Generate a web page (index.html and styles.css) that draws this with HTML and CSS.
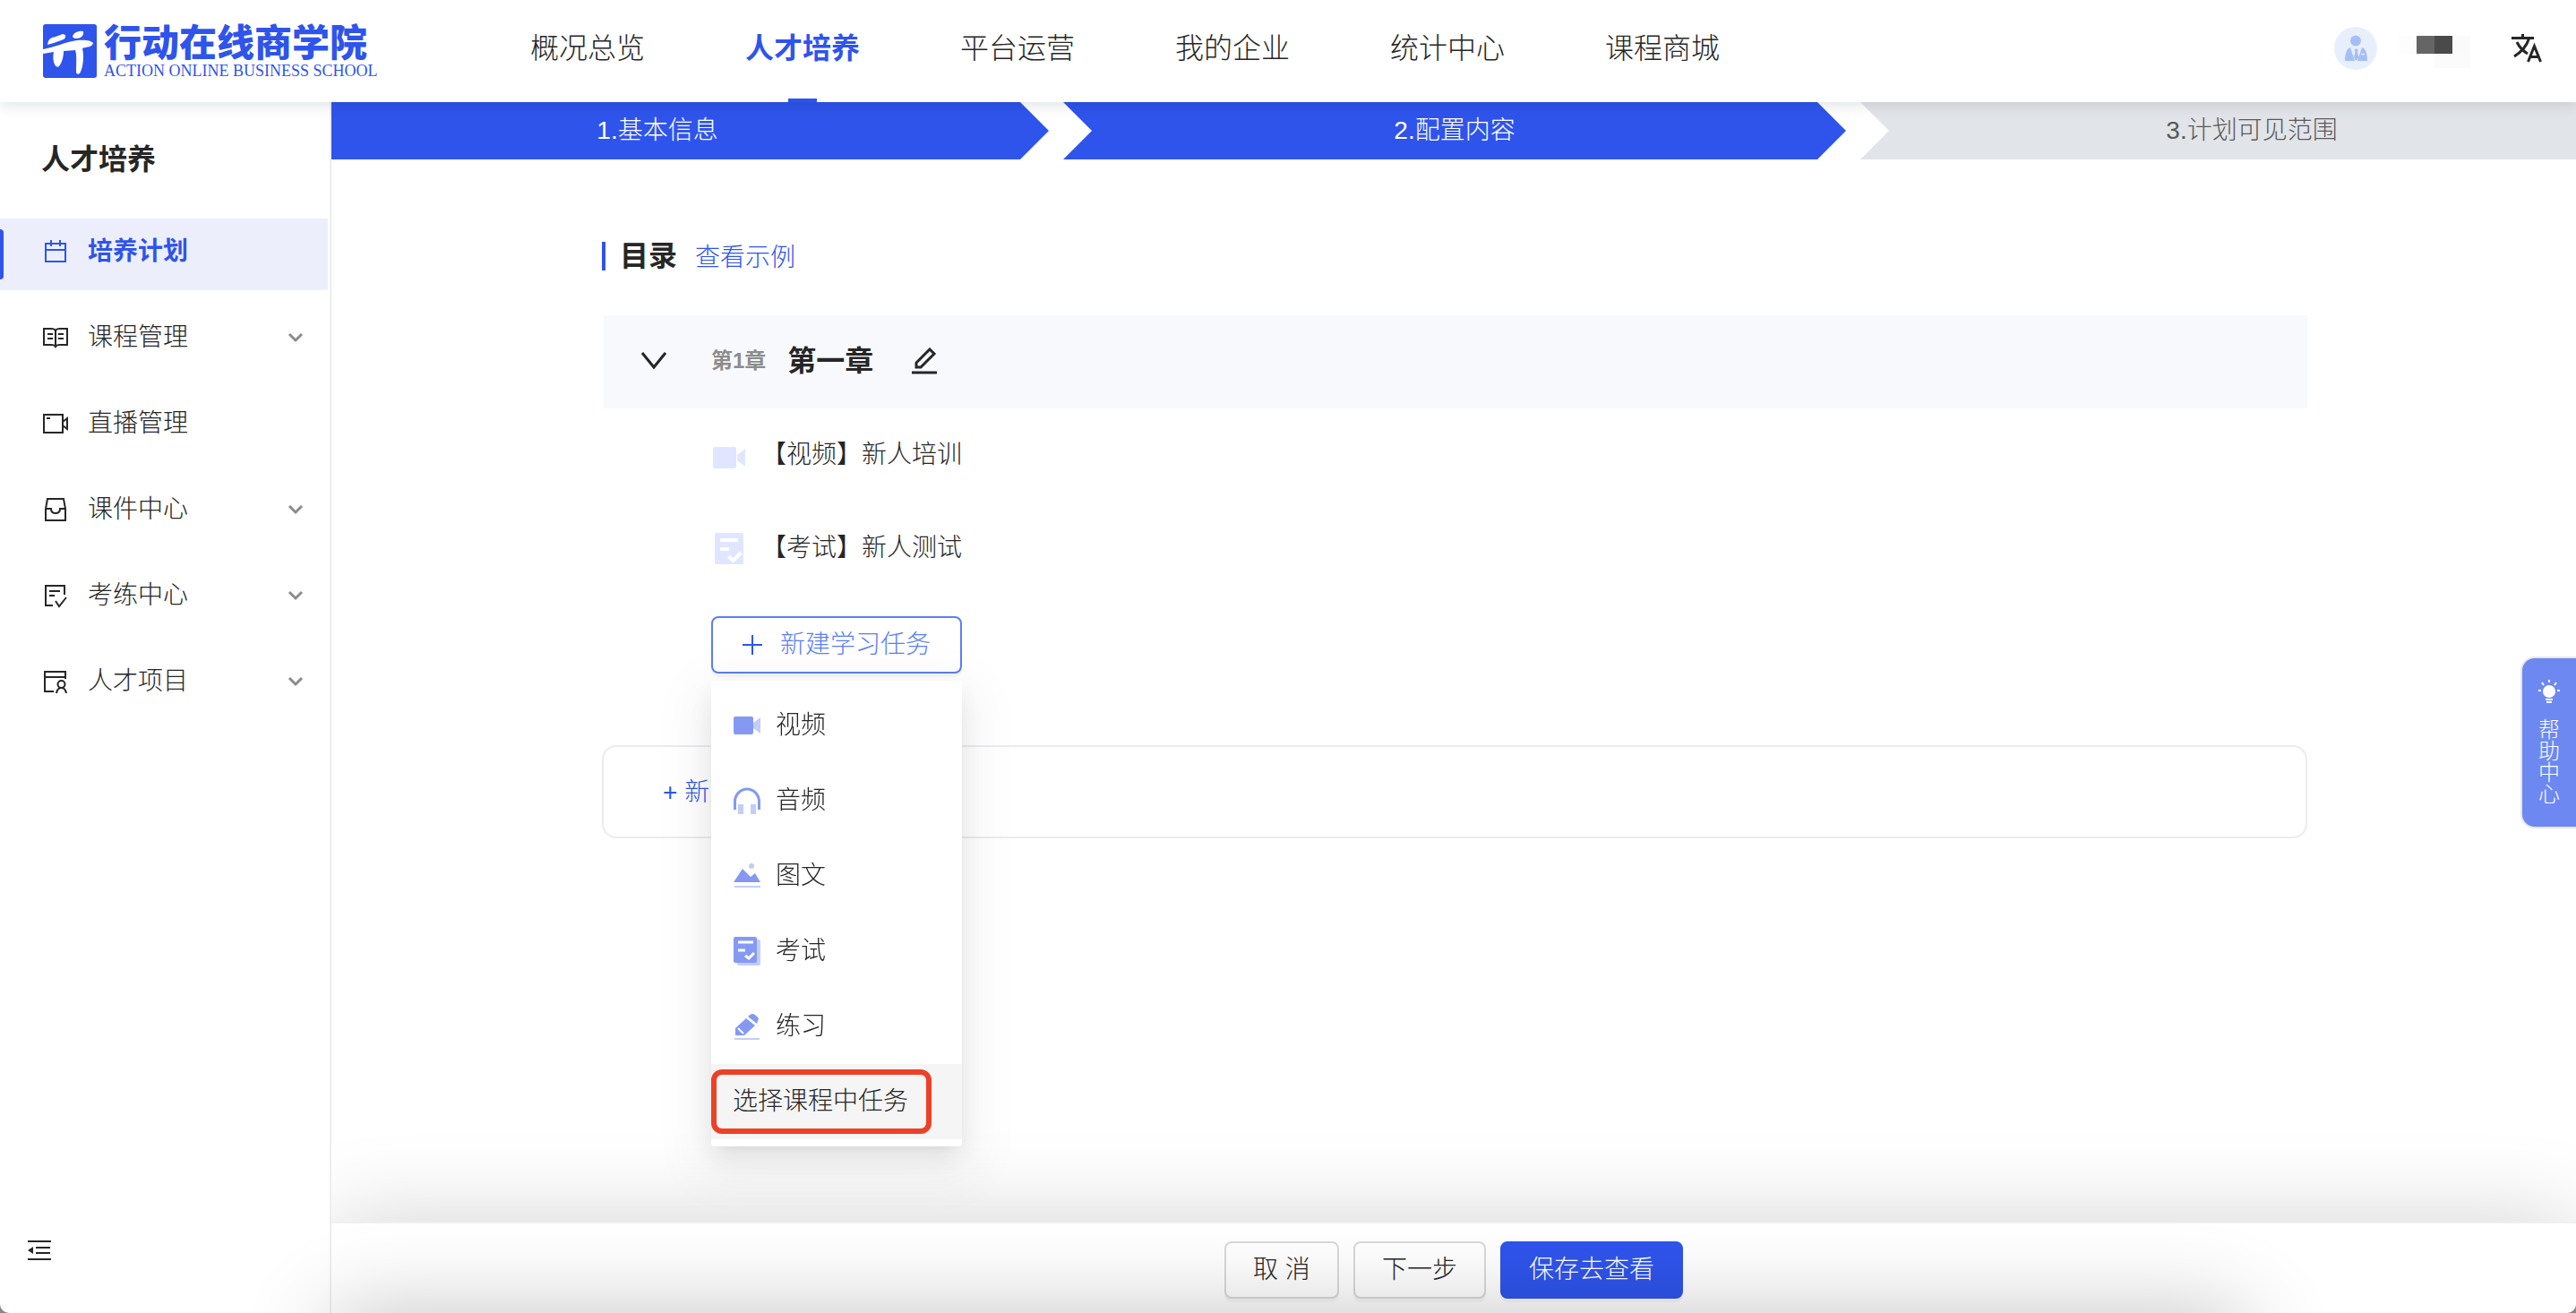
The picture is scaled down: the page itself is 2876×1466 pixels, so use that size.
FILE: index.html
```html
<!DOCTYPE html>
<html lang="zh-CN">
<head>
    <meta charset="UTF-8">
    <meta name="viewport" content="width=device-width, initial-scale=1.0">
    <title>行动在线商学院 - 培养计划</title>
    <link rel="stylesheet" href="styles.css">
</head>
<body>
    <header class="header">
        <a class="logo" href="#">
            <svg class="logo-mark" viewBox="0 0 60 60" aria-hidden="true">
                <rect width="60" height="60" rx="3" fill="#2f54eb"/>
                <g fill="#fff">
                    <path d="M5 23C6 16 9 15 14 14L22 11C26 11 26 15 23 17L12 21Z"/>
                    <path d="M33 14C34 9 40 7 45 8C46 13 42 16 37 16Q34 16 33 14Z"/>
                    <path d="M0 28C12 26 28 19 38 18C46 17 54 18 56 21C55 26 49 25 44 27C46 36 45 48 41 55Q38 57 37 54C37 45 38 34 36 29L23 30C23 37 21 43 18 47Q15 49 13 45C11 41 11 36 12 31L0 33Z"/>
                </g>
            </svg>
            <span class="logo-text">
                <span class="logo-cn">行动在线商学院</span>
                <span class="logo-en">ACTION ONLINE BUSINESS SCHOOL</span>
            </span>
        </a>
        <nav class="nav">
            <a class="nav-item" href="#">概况总览</a>
            <a class="nav-item active" href="#">人才培养</a>
            <a class="nav-item" href="#">平台运营</a>
            <a class="nav-item" href="#">我的企业</a>
            <a class="nav-item" href="#">统计中心</a>
            <a class="nav-item" href="#">课程商城</a>
        </nav>
        <div class="user">
            <svg class="avatar" viewBox="0 0 48 48" aria-hidden="true">
                <circle cx="24" cy="24" r="24" fill="#e8effc"/>
                <g fill="#a5bff6">
                    <circle cx="24" cy="15.500" r="6"/>
                    <path d="M12 38C12 30 14 24 18 23L23 38Z"/>
                    <path d="M37 38C37 30 35 24 31 23L26 38Z"/>
                    <path d="M24.500 24L27 26L26 28L27.500 34L24.500 38L22 34L23.500 28L22.500 26Z"/>
                </g>
                <path d="M30 30.500H34" stroke="#e8effc" stroke-width="1.500"/>
            </svg>
            <span class="user-name"></span>
            <button class="icon-button" type="button" aria-label="切换语言">
                <svg width="34" height="32" viewBox="0 0 34 32" fill="none" stroke="#262626" stroke-width="3">
                    <path d="M0 4.500H25M12.500 0V5M19.500 5C17 13 11 20 3 25M6 9C9 15 13 19 18 22"/>
                    <path d="M18.500 31L25.500 13.500L32.500 31M20.500 25.500H30.500"/>
                </svg>
            </button>
        </div>
    </header>

    <div class="layout">
        <aside class="sidebar">
            <h2 class="sidebar-title">人才培养</h2>
            <nav class="menu">
                <a class="menu-item active" href="#">
                    <svg class="menu-icon" viewBox="0 0 28 28">
                        <path d="M3 5H25V25H3ZM3 12H25M9 1V8M19 1V8"/>
                    </svg>
                    <span class="menu-label">培养计划</span>
                </a>
                <a class="menu-item" href="#">
                    <svg class="menu-icon" viewBox="0 0 28 28">
                        <path d="M1 4H9Q13 4 14 6Q15 4 19 4H27V22H19Q15 22 14 24Q13 22 9 22H1ZM14 6V24M5 10H11M5 15H11M17 10H23M17 15H23"/>
                    </svg>
                    <span class="menu-label">课程管理</span>
                    <svg class="menu-arrow" viewBox="0 0 16 10"><path d="M1 1L8 8L15 1"/></svg>
                </a>
                <a class="menu-item" href="#">
                    <svg class="menu-icon" viewBox="0 0 28 28">
                        <path d="M1 4H22V24H1ZM22 12L27 8V20L22 16M4 8H8"/>
                    </svg>
                    <span class="menu-label">直播管理</span>
                </a>
                <a class="menu-item" href="#">
                    <svg class="menu-icon" viewBox="0 0 28 28">
                        <path d="M5 2H23L25 13V26H3V13ZM3 13H9Q9 18 14 18Q19 18 19 13H25"/>
                    </svg>
                    <span class="menu-label">课件中心</span>
                    <svg class="menu-arrow" viewBox="0 0 16 10"><path d="M1 1L8 8L15 1"/></svg>
                </a>
                <a class="menu-item" href="#">
                    <svg class="menu-icon" viewBox="0 0 28 28">
                        <path d="M11 25H3V3H24V13M7 9H19M7 14H13M14 20L18 26L26 16"/>
                    </svg>
                    <span class="menu-label">考练中心</span>
                    <svg class="menu-arrow" viewBox="0 0 16 10"><path d="M1 1L8 8L15 1"/></svg>
                </a>
                <a class="menu-item" href="#">
                    <svg class="menu-icon" viewBox="0 0 28 28">
                        <path d="M12 25H2V3H25V11M2 9H25M15 27Q16 21 20.500 21Q25 21 26 27"/>
                        <circle cx="20.500" cy="17" r="4"/>
                    </svg>
                    <span class="menu-label">人才项目</span>
                    <svg class="menu-arrow" viewBox="0 0 16 10"><path d="M1 1L8 8L15 1"/></svg>
                </a>
            </nav>
            <button class="icon-button collapse" type="button" aria-label="收起菜单">
                <svg width="26" height="24" viewBox="0 0 26 24">
                    <path d="M0 2H26M9 9H25M9 15H25M0 22H26" fill="none" stroke="#262626" stroke-width="2"/>
                    <path d="M0 12L6 8V16Z" fill="#262626"/>
                </svg>
            </button>
        </aside>

        <div class="page">
            <main class="main">
                <div class="steps-wrap">
                    <ol class="steps">
                        <li class="step done">1.基本信息</li>
                        <li class="step done">2.配置内容</li>
                        <li class="step">3.计划可见范围</li>
                    </ol>
                </div>

                <div class="content">
                    <div class="title-row">
                        <h1 class="title">目录</h1>
                        <a class="link" href="#">查看示例</a>
                    </div>

                    <section class="chapter">
                        <div class="chapter-head">
                            <button class="icon-button" type="button" aria-label="收起章节">
                                <svg width="28" height="20" viewBox="0 0 28 20" fill="none" stroke="#262626" stroke-width="3">
                                    <path d="M1 1L14 17L27 1"/>
                                </svg>
                            </button>
                            <span class="chapter-no">第1章</span>
                            <h2 class="chapter-name">第一章</h2>
                            <button class="icon-button" type="button" aria-label="编辑章节">
                                <svg width="30" height="30" viewBox="0 0 30 30" fill="none" stroke="#262626" stroke-width="3">
                                    <path d="M1 28H29M6 22V17L21 2L26 7L11 22Z"/>
                                </svg>
                            </button>
                        </div>
                        <ul class="tasks">
                            <li class="task">
                                <svg class="task-icon" viewBox="0 0 36 36" fill="#e0e6ff">
                                    <rect y="9" width="26" height="24" rx="2"/>
                                    <path d="M27 18L36 11V31L27 24Z"/>
                                </svg>
                                <span>【视频】新人培训</span>
                            </li>
                            <li class="task">
                                <svg class="task-icon" viewBox="0 0 36 36">
                                    <rect x="2" y="1" width="32" height="35" rx="1" fill="#e0e6ff"/>
                                    <path d="M8 9H28M8 19H18M17.500 27L22.500 32L31.500 23" fill="none" stroke="#fff" stroke-width="4"/>
                                </svg>
                                <span>【考试】新人测试</span>
                            </li>
                        </ul>
                        <div class="dropdown">
                            <button class="new-task" type="button">
                                <svg width="22" height="22" viewBox="0 0 22 22" stroke="#2f54eb" stroke-width="2">
                                    <path d="M0 11H22M11 0V22"/>
                                </svg>
                                新建学习任务
                            </button>
                            <ul class="dropdown-menu">
                                <li><a class="dropdown-item" href="#">
                                    <svg class="type-icon" viewBox="0 0 32 32">
                                        <rect x="1" y="6" width="22" height="20" rx="2" fill="#8599f3"/>
                                        <path d="M23 13L31 7V25L23 19Z" fill="#c2cdfa"/>
                                    </svg>
                                    视频
                                </a></li>
                                <li><a class="dropdown-item" href="#">
                                    <svg class="type-icon" viewBox="0 0 32 32">
                                        <path d="M2.500 26V17A13.500 14 0 0 1 29.500 17V26" fill="none" stroke="#8599f3" stroke-width="3"/>
                                        <path d="M6 20H12V31H6ZM20 20H26V31H20Z" fill="#c2cdfa"/>
                                    </svg>
                                    音频
                                </a></li>
                                <li><a class="dropdown-item" href="#">
                                    <svg class="type-icon" viewBox="0 0 32 32">
                                        <path d="M1 23L11 8L20 17L25 13L31 23Z" fill="#8599f3"/>
                                        <circle cx="21" cy="5" r="3" fill="#c2cdfa"/>
                                        <path d="M2 28H31" stroke="#c2cdfa" stroke-width="2"/>
                                    </svg>
                                    图文
                                </a></li>
                                <li><a class="dropdown-item" href="#">
                                    <svg class="type-icon" viewBox="0 0 32 32">
                                        <rect x="5" y="3" width="26" height="29" rx="2" fill="#c2cdfa"/>
                                        <rect x="1" width="26" height="29" rx="2" fill="#8599f3"/>
                                        <path d="M6 6H23M6 15H14M14 21L18 24L24 18" fill="none" stroke="#fff" stroke-width="3"/>
                                    </svg>
                                    考试
                                </a></li>
                                <li><a class="dropdown-item" href="#">
                                    <svg class="type-icon" viewBox="0 0 32 32">
                                        <path d="M3 26V18L15 7L25 15L13 26Z" fill="#8599f3"/>
                                        <path d="M17 5Q21 0 25 3L29 7L27 13Z" fill="#8599f3"/>
                                        <path d="M6 18L12 24" stroke="#fff" stroke-width="2"/>
                                        <path d="M2 30H30" stroke="#c2cdfa" stroke-width="2"/>
                                    </svg>
                                    练习
                                </a></li>
                                <li><a class="dropdown-item hover" href="#">
                                    选择课程中任务
                                    <span class="mark"></span>
                                </a></li>
                            </ul>
                        </div>
                    </section>

                    <button class="new-chapter" type="button">+ 新建章</button>
                </div>
            </main>

            <footer class="footer">
                <button class="btn" type="button">取 消</button>
                <button class="btn" type="button">下一步</button>
                <button class="btn primary" type="button">保存去查看</button>
            </footer>
        </div>
    </div>

    <a class="help" href="#">
        <svg width="24" height="28" viewBox="0 0 24 28" stroke="#fff" stroke-width="2">
            <circle cx="12" cy="13" r="7" fill="#fff" stroke="none"/>
            <path d="M12 0V3M4 3L6 6M20 3L18 6M0 12H3M21 12H24M8 22H16M9 25H15"/>
        </svg>
        <span class="help-text">帮助中心</span>
    </a>
</body>
</html>
```
FILE: styles.css
```css
* {
    box-sizing: border-box;
}

html {
    background-color: #8d8288;
}

body {
    margin: 0;
    min-height: 100vh;
    display: flex;
    flex-direction: column;
    overflow: hidden;
    border-radius: 0 0 10px 10px;
    background-color: #fff;
    color: #262626;
    font-family: "Liberation Sans", "Noto Sans CJK SC", sans-serif;
    font-size: 28px;
    font-weight: 300;
    line-height: 40px;
}

a {
    color: inherit;
    text-decoration: none;
}

button {
    font: inherit;
    color: inherit;
    cursor: pointer;
}

h1,
h2,
ul,
ol {
    margin: 0;
    padding: 0;
    list-style: none;
}

svg {
    display: block;
    flex-shrink: 0;
}

.icon-button {
    padding: 0;
    border: 0;
    background: none;
}

/* header */
.header {
    position: relative;
    z-index: 2;
    display: flex;
    align-items: center;
    height: 114px;
    padding: 0 38px 0 48px;
    background-color: #fff;
    box-shadow: 0 2px 16px rgba(0, 21, 41, 0.14);
}

.logo {
    display: flex;
    align-items: center;
    gap: 8px;
    width: 544px;
    color: #2f54eb;
}

.logo-mark {
    width: 60px;
    height: 60px;
}

.logo-text {
    display: flex;
    flex-direction: column;
    padding-top: 4px;
    white-space: nowrap;
}

.logo-cn {
    font-size: 42px;
    font-weight: 900;
    line-height: 40px;
}

.logo-en {
    font-family: "Liberation Serif", serif;
    font-size: 18px;
    line-height: 20px;
}

.nav {
    display: flex;
    gap: 112px;
    height: 100%;
    font-size: 32px;
    line-height: 108px;
}

.nav-item.active {
    position: relative;
    color: #2f54eb;
    font-weight: 600;
}

.nav-item.active::after {
    content: "";
    position: absolute;
    left: 50%;
    bottom: 0;
    width: 32px;
    height: 4px;
    margin-left: -16px;
    background-color: #2f54eb;
}

.user {
    display: flex;
    align-items: center;
    margin-left: auto;
    padding-bottom: 6px;
}

.avatar {
    width: 48px;
    height: 48px;
}

.user-name {
    width: 40px;
    height: 20px;
    margin: 0 66px 8px 44px;
    background: linear-gradient(90deg, #656565 50%, #4a4a4a 50%);
    box-shadow: 20px 0 #fafafa, 20px 16px #fbfbfb, -20px 0 #fdfdfd;
}

/* sidebar */
.layout {
    flex: 1;
    display: flex;
}

.sidebar {
    display: flex;
    flex-direction: column;
    width: 370px;
    padding: 44px 0 58px;
    border-right: 2px solid #eee;
}

.sidebar-title {
    padding-left: 46px;
    font-size: 32px;
    font-weight: 600;
    line-height: 40px;
}

.menu {
    display: flex;
    flex-direction: column;
    gap: 16px;
    margin: 46px 2px 0 0;
}

.menu-item {
    display: flex;
    align-items: center;
    height: 80px;
    padding: 0 28px 6px 48px;
}

.menu-item.active {
    position: relative;
    background-color: #eceffb;
    color: #2f54eb;
    font-weight: 600;
}

.menu-item.active::before {
    content: "";
    position: absolute;
    left: 0;
    top: 12px;
    width: 4px;
    height: 56px;
    border-radius: 0 4px 4px 0;
    background-color: #2f54eb;
}

.menu-icon {
    width: 28px;
    height: 28px;
    margin-right: 22px;
    fill: none;
    stroke: currentColor;
    stroke-width: 2;
}

.menu-arrow {
    width: 16px;
    height: 10px;
    margin-left: auto;
    overflow: visible;
    fill: none;
    stroke: #8c8c8c;
    stroke-width: 3;
}

.collapse {
    margin-top: auto;
    margin-left: 31px;
    align-self: flex-start;
}

/* steps */
.page {
    flex: 1;
    display: flex;
    flex-direction: column;
    min-width: 0;
}

.main {
    flex: 1;
}

.steps-wrap {
    overflow: hidden;
}

.steps {
    display: flex;
    gap: 16px;
    margin: 0 -75px 0 -73px;
}

.step {
    flex: 1;
    background-color: #e1e4e8;
    color: #595959;
    line-height: 64px;
    text-align: center;
    clip-path: polygon(0 0, calc(100% - 32px) 0, 100% 50%, calc(100% - 32px) 100%, 0 100%, 32px 50%);
}

.step.done {
    background-color: #2f54eb;
    color: #fff;
}

/* content */
.content {
    padding: 88px 300px 0 302px;
}

.title-row {
    display: flex;
    gap: 20px;
    margin-bottom: 44px;
}

.title {
    display: flex;
    align-items: center;
    gap: 16px;
    height: 40px;
    font-size: 32px;
    font-weight: 600;
}

.title::before {
    content: "";
    width: 4px;
    height: 32px;
    background-color: #2f54eb;
}

.link {
    padding-top: 2px;
    color: #2f54eb;
}

.chapter-head {
    display: flex;
    align-items: center;
    height: 104px;
    margin-left: 2px;
    padding: 0 42px 2px;
    background-color: #f8f9fd;
}

.chapter-no {
    margin: 0 24px 0 50px;
    color: #8c8c8c;
    font-size: 24px;
    font-weight: 600;
}

.chapter-name {
    margin-right: 42px;
    font-size: 32px;
    font-weight: 600;
}

.tasks {
    padding-left: 124px;
}

.task {
    display: flex;
    align-items: center;
    gap: 18px;
    height: 104px;
}

.task-icon {
    width: 36px;
    height: 36px;
}

.dropdown {
    position: relative;
    width: 280px;
    margin: 24px 0 80px 122px;
}

.new-task {
    display: flex;
    align-items: center;
    justify-content: center;
    gap: 20px;
    width: 100%;
    height: 64px;
    border: 2px solid #597ef7;
    border-radius: 8px;
    background-color: #fff;
    box-shadow: 0 4px 0 rgba(0, 0, 0, 0.03);
    color: #597ef7;
}

.dropdown-menu {
    position: absolute;
    top: 72px;
    left: 0;
    z-index: 1;
    width: 100%;
    padding: 8px 0;
    border-radius: 4px;
    background-color: #fff;
    box-shadow: 0 6px 12px -8px rgba(0, 0, 0, 0.12), 0 12px 32px rgba(0, 0, 0, 0.08), 0 18px 56px 16px rgba(0, 0, 0, 0.05);
}

.dropdown-item {
    position: relative;
    display: flex;
    align-items: center;
    gap: 16px;
    height: 84px;
    padding: 0 24px;
}

.dropdown-item.hover {
    background-color: #f5f5f5;
}

.type-icon {
    width: 32px;
    height: 32px;
}

.mark {
    position: absolute;
    inset: 6px 34px 6px 0;
    border: 6px solid #ec4127;
    border-radius: 12px;
}

.new-chapter {
    width: 100%;
    height: 104px;
    padding: 2px 66px 0;
    border: 2px solid #ebebf0;
    border-radius: 16px;
    background-color: #fff;
    color: #2f54eb;
    text-align: left;
}

/* footer */
.footer {
    position: relative;
    display: flex;
    justify-content: center;
    gap: 16px;
    padding: 20px 0 16px;
    border-top: 2px solid #f0f0f0;
    border-radius: 0 0 10px 0;
    background-color: #fff;
    box-shadow: 0 0 100px rgba(0, 0, 0, 0.18);
    clip-path: inset(-110px 0 0 0);
}

.btn {
    height: 64px;
    padding: 0 30px;
    border: 2px solid #d9d9d9;
    border-radius: 8px;
    background-color: #fff;
    box-shadow: 0 4px 0 rgba(0, 0, 0, 0.03);
}

.btn.primary {
    border-color: #2f54eb;
    background-color: #2f54eb;
    color: #fff;
}

/* soft shade rising from the lower edge of the window */
.page::after {
    content: "";
    position: fixed;
    left: 370px;
    right: 370px;
    bottom: -100px;
    height: 100px;
    box-shadow: 0 0 100px rgba(0, 0, 0, 0.24);
    pointer-events: none;
}

/* help tab */
.help {
    position: fixed;
    top: 50%;
    right: 0;
    z-index: 3;
    display: flex;
    flex-direction: column;
    align-items: center;
    gap: 16px;
    width: 62px;
    padding: 24px 0;
    border: 2px solid #e6e6e6;
    border-right: 0;
    border-radius: 16px 0 0 16px;
    background-color: #6e88f1;
    color: #fff;
    font-size: 24px;
    line-height: 24px;
}

.help-text {
    width: 24px;
}
```
